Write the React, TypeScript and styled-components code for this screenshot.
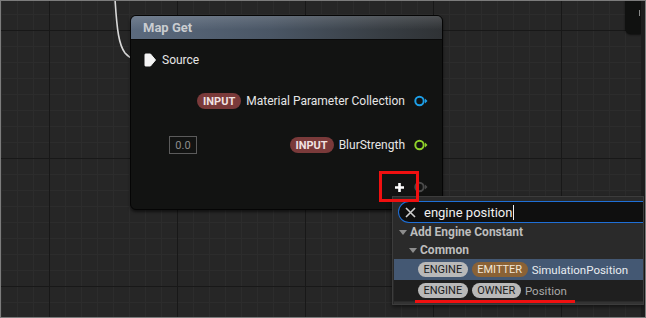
import React from "react";
import styled, {createGlobalStyle} from "styled-components";

const GlobalStyle = createGlobalStyle`
  html, body {
    margin: 0;
    padding: 0;
    background: #262626;
  }
  body {
    font-family: Roboto, "Noto Sans", "DejaVu Sans", sans-serif;
  }
`;

const Canvas = styled.div`
  position: relative;
  width: 646px;
  height: 318px;
  box-sizing: border-box;
  border: 1px solid #7c7c7c;
  overflow: hidden;
  background-color: #262626;
  background-image: linear-gradient(to right, #181818 1px, transparent 1px),
    linear-gradient(to bottom, #181818 1px, transparent 1px),
    linear-gradient(to right, #2c2c2c 1px, transparent 1px),
    linear-gradient(to bottom, #2c2c2c 1px, transparent 1px);
  background-size: 128px 128px, 128px 128px, 16px 16px, 16px 16px;
  background-position: 48px 0, 0 29px, 0 0, 0 13px;
`;

const RightStrip = styled.div`
  position: absolute;
  top: 0;
  right: 0;
  width: 4px;
  height: 100%;
  background: #1e1e1e;
`;

const CornerNode = styled.div`
  position: absolute;
  top: -6px;
  left: 624px;
  width: 16px;
  height: 39px;
  background: #101110;
  border-radius: 6px 0 0 6px;
  box-shadow: 0 1px 2px rgba(0, 0, 0, 0.6);
`;

const CornerMark = styled.div`
  position: absolute;
  top: 15px;
  left: 14px;
  width: 1px;
  height: 6px;
  background: #8a8a8a;
`;

const Wire = styled.svg`
  position: absolute;
  left: 0;
  top: 0;
  pointer-events: none;
`;

const Node = styled.div`
  position: absolute;
  left: 129px;
  top: 14px;
  width: 311px;
  height: 193px;
  display: flex;
  flex-direction: column;
  border-radius: 6px;
  background: #121312;
  border: 1px solid #050505;
  box-shadow: 0 2px 3px rgba(0, 0, 0, 0.55);
  overflow: hidden;
`;

const Header = styled.div`
  height: 23px;
  flex: none;
  display: flex;
  align-items: center;
  padding-left: 12px;
  font-size: 13px;
  font-weight: 700;
  color: #c9ccd0;
  background: linear-gradient(to bottom, rgba(255, 255, 255, 0.14), rgba(255, 255, 255, 0) 60%),
    linear-gradient(to right, #5b6a7e 0%, #4a5665 45%, #383e44 80%, #2f3235 100%);
  border-bottom: 1px solid #0a0a0a;
`;

const Body = styled.div`
  flex: 1;
  display: flex;
  flex-direction: column;
  padding: 9px 14px 0 13px;
`;

const Row = styled.div<{$top: number; $right?: boolean}>`
  height: 22px;
  margin-top: ${(p) => p.$top}px;
  display: flex;
  align-items: center;
  justify-content: ${(p) => (p.$right ? "flex-end" : "flex-start")};
  gap: 5px;
  font-size: 12px;
  color: #e6e6e6;
`;

const Label = styled.span<{$pad?: number}>`
  white-space: nowrap;
  margin-right: ${(p) => p.$pad || 0}px;
`;

const Spacer = styled.div`
  flex: 1;
`;

const InputTag = styled.span`
  height: 16px;
  padding: 0 6px;
  border-radius: 8px;
  background: #7a3a3a;
  color: #f1e2e2;
  font-size: 11px;
  font-weight: 700;
  display: inline-flex;
  align-items: center;
`;

const DefaultBox = styled.div`
  margin-left: 25px;
  width: 26px;
  height: 16px;
  border: 1px solid #5b5b5b;
  color: #8c8c8c;
  font-size: 11px;
  display: flex;
  align-items: center;
  justify-content: center;
`;

const PlusGlyph = styled.svg`
  margin-right: 4px;
`;

const Highlight = styled.div`
  position: absolute;
  left: 378px;
  top: 170px;
  width: 34px;
  height: 25px;
  border: 3px solid #f01010;
`;

const Popup = styled.div`
  position: absolute;
  left: 391px;
  top: 195px;
  width: 252px;
  height: 109px;
  box-sizing: border-box;
  background: #2a2a2a;
  border: 1px solid #3c3c3c;
  display: flex;
  flex-direction: column;
  padding: 4px 0 0 1px;
  box-shadow: 0 2px 4px rgba(0, 0, 0, 0.5);
`;

const SearchBox = styled.div`
  height: 22px;
  flex: none;
  box-sizing: border-box;
  margin: 0 0 0 4px;
  border: 1px solid #1f6fd6;
  border-right: none;
  border-radius: 11px 0 0 11px;
  background: #0f0f0f;
  display: flex;
  align-items: center;
  padding-left: 6px;
  gap: 8px;
  color: #f0f0f0;
  font-size: 13px;
`;

const Caret = styled.span`
  display: inline-block;
  width: 1px;
  height: 15px;
  background: #f0f0f0;
  margin-left: 1px;
  vertical-align: -3px;
`;

const Category = styled.div<{$indent: number}>`
  height: 18px;
  flex: none;
  display: flex;
  align-items: center;
  gap: 3px;
  padding-left: ${(p) => p.$indent}px;
  font-size: 12px;
  font-weight: 700;
  color: #bdbdbd;
`;

const Arrow = styled.span`
  width: 0;
  height: 0;
  border-left: 4px solid transparent;
  border-right: 4px solid transparent;
  border-top: 5px solid #8d8d8d;
`;

const Item = styled.div<{$selected?: boolean}>`
  height: 21px;
  flex: none;
  display: flex;
  align-items: center;
  gap: 4px;
  padding-left: 24px;
  background: ${(p) => (p.$selected ? "#445873" : "#1f1f1f")};
  font-size: 11.5px;
  color: ${(p) => (p.$selected ? "#e8ecf0" : "#a9a9a9")};
  position: relative;
`;

const Tag = styled.span<{$kind: "engine" | "emitter"}>`
  height: 15px;
  padding: 0 5.5px;
  border-radius: 8px;
  font-size: 11px;
  display: inline-flex;
  align-items: center;
  background: ${(p) => (p.$kind === "emitter" ? "#8a6236" : "#b9b9b9")};
  color: ${(p) => (p.$kind === "emitter" ? "#f2e6d6" : "#1b1b1b")};
`;

const Underline = styled.div`
  position: absolute;
  left: 21px;
  bottom: -2px;
  width: 160px;
  height: 3px;
  background: #f01010;
`;

const Footer = styled.div`
  flex: 1;
  background: #333;
  margin-top: 1px;
`;

const Pin: React.FC<{color: string}> = ({color}) => (
  <svg width="14" height="12" viewBox="0 0 14 12">
    <circle cx="5.5" cy="6" r="4.2" fill="none" stroke={color} strokeWidth="2" />
    <path d="M11 3.5 L13.5 6 L11 8.5 Z" fill={color} />
  </svg>
);

const App: React.FC = () => {
  return (
    <>
      <GlobalStyle />
      <Canvas>
        <Wire width="160" height="80">
          <path
            d="M114 -2 C116 30 118 44 124 52 C130 59 136 59 143 59"
            fill="none"
            stroke="#d8d8d8"
            strokeWidth="1.6"
          />
        </Wire>
        <CornerNode>
          <CornerMark />
        </CornerNode>
        <RightStrip />
        <Node>
          <Header>Map Get</Header>
          <Body>
            <Row $top={0}>
              <svg width="13" height="14" viewBox="0 0 13 14">
                <path
                  d="M1 1.5 Q1 1 1.5 1 H6.5 L11.5 7 L6.5 13 H1.5 Q1 13 1 12.5 Z"
                  fill="#f4f4f4"
                  stroke="#f4f4f4"
                  strokeLinejoin="round"
                  strokeWidth="1"
                />
              </svg>
              <Label>Source</Label>
            </Row>
            <Row $top={19} $right>
              <InputTag>INPUT</InputTag>
              <Label $pad={4}>Material Parameter Collection</Label>
              <Pin color="#1d9ee6" />
            </Row>
            <Row $top={22}>
              <DefaultBox>0.0</DefaultBox>
              <Spacer />
              <InputTag>INPUT</InputTag>
              <Label $pad={4}>BlurStrength</Label>
              <Pin color="#8fd12a" />
            </Row>
            <Row $top={20} $right>
              <PlusGlyph width="11" height="11" viewBox="0 0 11 11">
                <path d="M5.5 1 V10 M1 5.5 H10" stroke="#ffffff" strokeWidth="2.6" />
              </PlusGlyph>
              <Pin color="#4a4a4a" />
            </Row>
          </Body>
        </Node>
        <Popup>
          <SearchBox>
            <svg width="11" height="11" viewBox="0 0 11 11">
              <path d="M1 1 L10 10 M10 1 L1 10" stroke="#cfcfcf" strokeWidth="1.6" />
            </svg>
            <span>
              engine position
              <Caret />
            </span>
          </SearchBox>
          <Category $indent={5}>
            <Arrow />
            Add Engine Constant
          </Category>
          <Category $indent={15}>
            <Arrow />
            Common
          </Category>
          <Item $selected>
            <Tag $kind="engine">ENGINE</Tag>
            <Tag $kind="emitter">EMITTER</Tag>
            SimulationPosition
          </Item>
          <Item>
            <Tag $kind="engine">ENGINE</Tag>
            <Tag $kind="engine">OWNER</Tag>
            Position
            <Underline />
          </Item>
          <Footer />
        </Popup>
        <Highlight />
      </Canvas>
    </>
  );
};

export default App;
